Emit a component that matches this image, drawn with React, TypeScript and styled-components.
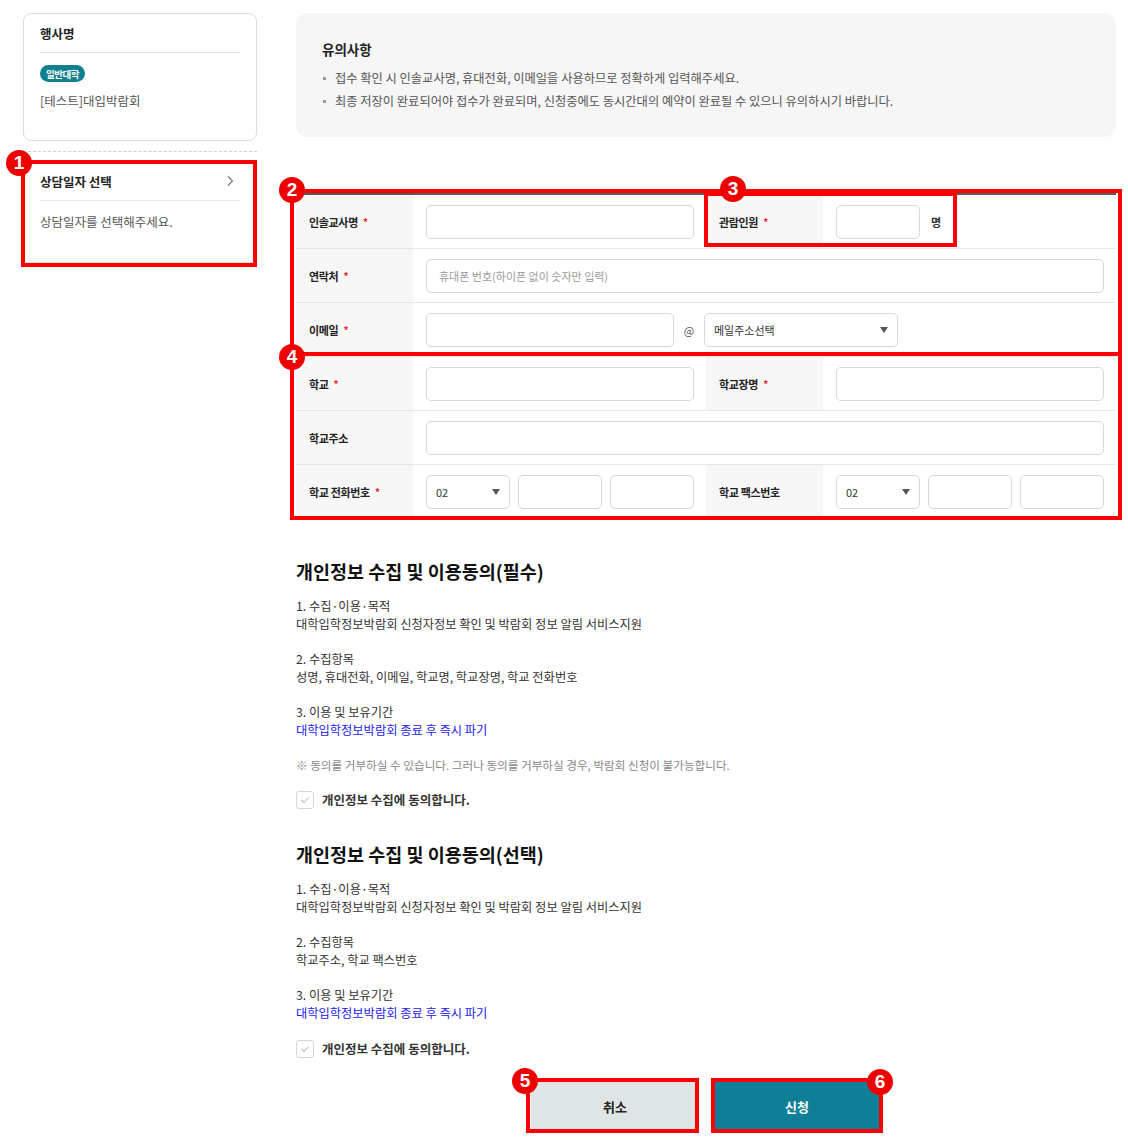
import React from 'react';
import styled, { createGlobalStyle } from 'styled-components';

const GlobalStyle = createGlobalStyle`
  * { box-sizing: border-box; }
  body {
    margin: 0;
    background: #fff;
    color: #222;
    font-family: "Noto Sans CJK KR", "Noto Sans", sans-serif;
  }
`;

const Page = styled.div`
  position: relative;
  width: 1128px;
  display: flex;
  gap: 39px;
  padding: 13px 12px 12px 23px;
`;

const Side = styled.aside`
  width: 234px;
  flex-shrink: 0;
`;

const Main = styled.main`
  width: 820px;
  flex-shrink: 0;
`;

/* ---- left side ---- */

const EventCard = styled.div`
  height: 128px;
  padding: 0 16px;
  border: 1.5px solid #dcdcdc;
  border-radius: 8px;
`;

const CardTitle = styled.div`
  display: flex;
  align-items: center;
  justify-content: space-between;
  height: 39px;
  border-bottom: 1px solid #e6e6e6;
  font-size: 12.5px;
  font-weight: 700;
  color: #222;

  svg {
    margin-right: 5px;
  }
`;

const Tag = styled.span`
  display: inline-flex;
  align-items: center;
  height: 17px;
  margin-top: 12px;
  padding: 0 6px;
  border-radius: 9px;
  background: #13808f;
  color: #fff;
  font-size: 9.5px;
  font-weight: 700;
  letter-spacing: -0.05em;
`;

const EventName = styled.div`
  margin-top: 9px;
  font-size: 12.5px;
  line-height: 18px;
  color: #555;
`;

const DashLine = styled.hr`
  margin: 10px 0 9px;
  border: 0;
  border-top: 1px dashed #cfcfcf;
`;

const DateCard = styled.div`
  height: 102px;
  padding: 0 16px;
  border: 1px solid #e2e2e2;
`;

const Hint = styled.div`
  padding-top: 12px;
  font-size: 12.5px;
  line-height: 18px;
  color: #555;
`;

/* ---- notice ---- */

const Notice = styled.section`
  height: 124px;
  padding: 26px 26px 0;
  border-radius: 12px;
  background: #f6f6f6;
`;

const NoticeTitle = styled.h3`
  margin: 0;
  font-size: 13.5px;
  font-weight: 700;
  line-height: 20px;
  color: #222;
`;

const NoticeList = styled.ul`
  margin: 8px 0 0;
  padding: 0;
  list-style: none;
`;

const NoticeItem = styled.li`
  display: flex;
  align-items: center;
  gap: 9px;
  font-size: 12.25px;
  line-height: 23px;
  color: #555;

  &::before {
    content: '';
    width: 3px;
    height: 3px;
    margin-left: 1px;
    background: #9a9a9a;
    flex-shrink: 0;
  }
`;

/* ---- form table ---- */

const FormTable = styled.div`
  margin-top: 56px;
  border-top: 2px solid #5a5a5a;
`;

const Row = styled.div`
  display: grid;
  grid-template-columns: 117px 293px 117px 293px;
  height: 54px;
  border-bottom: 1px solid #e6e6e6;
`;

const Label = styled.div`
  display: flex;
  align-items: center;
  padding-left: 13px;
  background: #f7f7f7;
  font-size: 11px;
  font-weight: 700;
  letter-spacing: -0.03em;
  color: #222;
`;

const Req = styled.span`
  margin-left: 5px;
  color: #e8262a;
  font-size: 10px;
`;

const Cell = styled.div<{ $span?: boolean }>`
  display: flex;
  align-items: center;
  gap: 8px;
  padding: 0 12px 0 13px;
  grid-column: ${p => (p.$span ? 'span 3' : 'auto')};
`;

const TextInput = styled.input<{ $w?: number }>`
  flex: ${p => (p.$w ? `0 0 ${p.$w}px` : '1 1 0')};
  min-width: 0;
  height: 34px;
  padding: 0 12px;
  border: 1px solid #d8d8d8;
  border-radius: 5px;
  background: #fff;
  font-family: inherit;
  font-size: 11px;
  color: #333;

  &::placeholder {
    color: #9a9a9a;
  }
`;

const SelectBox = styled.div<{ $w?: number }>`
  flex: ${p => (p.$w ? `0 0 ${p.$w}px` : '1 1 0')};
  display: flex;
  align-items: center;
  justify-content: space-between;
  height: 34px;
  padding: 0 9px;
  border: 1px solid #d8d8d8;
  border-radius: 5px;
  background: #fff;
  font-size: 11px;
  color: #333;
`;

const Caret = styled.span`
  width: 0;
  height: 0;
  border-left: 4.5px solid transparent;
  border-right: 4.5px solid transparent;
  border-top: 6px solid #555;
`;

const At = styled.span`
  width: 14px;
  text-align: center;
  font-size: 11px;
  color: #555;
`;

const Unit = styled.span`
  margin-left: 3px;
  font-size: 11px;
  font-weight: 700;
  color: #333;
`;

/* ---- terms ---- */

const Terms = styled.section<{ $top: number }>`
  margin-top: ${p => p.$top}px;
`;

const TermHead = styled.h2`
  margin: 0 0 13px;
  font-size: 18.5px;
  font-weight: 700;
  line-height: 26px;
  color: #111;
`;

const TermBlock = styled.p`
  margin: 0 0 17px;
  font-size: 12.25px;
  line-height: 18px;
  color: #333;
`;

const Blue = styled.span`
  color: #2121ee;
`;

const TermNote = styled.p`
  margin: 0 0 16px;
  font-size: 11.6px;
  line-height: 18px;
  color: #888;
`;

const CheckRow = styled.label`
  display: flex;
  align-items: center;
  gap: 8px;
  font-size: 12.5px;
  font-weight: 700;
  color: #333;
`;

const CheckBox = styled.span`
  display: flex;
  align-items: center;
  justify-content: center;
  width: 18px;
  height: 18px;
  border: 1px solid #d5d5d5;
  border-radius: 3px;
  background: #fff;
`;

/* ---- buttons ---- */

const Actions = styled.div`
  display: flex;
  justify-content: center;
  gap: 14px;
  margin-top: 23px;
`;

const Button = styled.button<{ $primary?: boolean }>`
  width: 168px;
  height: 50px;
  border: 0;
  border-radius: 4px;
  background: ${p => (p.$primary ? '#0e7f96' : '#dfe5e5')};
  color: ${p => (p.$primary ? '#fff' : '#222')};
  font-family: inherit;
  font-size: 13px;
  font-weight: 700;
`;

/* ---- screenshot markup (red boxes and numbered pins) ---- */

const Overlay = styled.div`
  position: absolute;
  inset: 0;
  pointer-events: none;
`;

const Mark = styled.div<{ $x: number; $y: number; $w: number; $h: number }>`
  position: absolute;
  left: ${p => p.$x}px;
  top: ${p => p.$y}px;
  width: ${p => p.$w}px;
  height: ${p => p.$h}px;
  border: 4px solid #ff0000;
`;

const Pin = styled.div<{ $x: number; $y: number }>`
  position: absolute;
  left: ${p => p.$x - 13}px;
  top: ${p => p.$y - 13}px;
  width: 26px;
  height: 26px;
  border-radius: 50%;
  background: #ee0000;
  color: #fff;
  display: flex;
  align-items: center;
  justify-content: center;
  font-family: "Liberation Sans", Arial, sans-serif;
  font-size: 19px;
  font-weight: 700;
`;

const marks = [
  { x: 21, y: 160, w: 236, h: 107 },
  { x: 290, y: 189, w: 832, h: 167 },
  { x: 704, y: 192, w: 253, h: 55 },
  { x: 290, y: 352, w: 832, h: 168 },
  { x: 526, y: 1078, w: 173, h: 55 },
  { x: 711, y: 1078, w: 172, h: 55 },
];

const pins = [
  { n: 1, x: 19, y: 163 },
  { n: 2, x: 292, y: 190 },
  { n: 3, x: 733, y: 189 },
  { n: 4, x: 292, y: 357 },
  { n: 5, x: 525, y: 1081 },
  { n: 6, x: 880, y: 1082 },
];

const Chevron = () => (
  <svg width="10" height="12" viewBox="0 0 10 12">
    <path d="M3 1.5 L7.5 6 L3 10.5" fill="none" stroke="#777" strokeWidth="1.2" />
  </svg>
);

const Check = () => (
  <svg width="10" height="8" viewBox="0 0 10 8">
    <path d="M1.5 4 L4 6.5 L8.5 1.5" fill="none" stroke="#bdbdbd" strokeWidth="1.1" />
  </svg>
);

const Select = ({ value, w }: { value: string; w?: number }) => (
  <SelectBox $w={w}>
    {value}
    <Caret />
  </SelectBox>
);

const Agree = () => (
  <CheckRow>
    <CheckBox>
      <Check />
    </CheckBox>
    개인정보 수집에 동의합니다.
  </CheckRow>
);

const App: React.FC = () => {
  return (
    <>
      <GlobalStyle />
      <Page>
        <Side>
          <EventCard>
            <CardTitle>행사명</CardTitle>
            <Tag>일반대학</Tag>
            <EventName>[테스트]대입박람회</EventName>
          </EventCard>
          <DashLine />
          <DateCard>
            <CardTitle>
              상담일자 선택
              <Chevron />
            </CardTitle>
            <Hint>상담일자를 선택해주세요.</Hint>
          </DateCard>
        </Side>

        <Main>
          <Notice>
            <NoticeTitle>유의사항</NoticeTitle>
            <NoticeList>
              <NoticeItem>접수 확인 시 인솔교사명, 휴대전화, 이메일을 사용하므로 정확하게 입력해주세요.</NoticeItem>
              <NoticeItem>최종 저장이 완료되어야 접수가 완료되며, 신청중에도 동시간대의 예약이 완료될 수 있으니 유의하시기 바랍니다.</NoticeItem>
            </NoticeList>
          </Notice>

          <FormTable>
            <Row>
              <Label>인솔교사명<Req>*</Req></Label>
              <Cell><TextInput /></Cell>
              <Label>관람인원<Req>*</Req></Label>
              <Cell>
                <TextInput $w={84} />
                <Unit>명</Unit>
              </Cell>
            </Row>
            <Row>
              <Label>연락처<Req>*</Req></Label>
              <Cell $span>
                <TextInput placeholder="휴대폰 번호(하이픈 없이 숫자만 입력)" />
              </Cell>
            </Row>
            <Row>
              <Label>이메일<Req>*</Req></Label>
              <Cell $span>
                <TextInput $w={248} />
                <At>@</At>
                <Select value="메일주소선택" w={194} />
              </Cell>
            </Row>
            <Row>
              <Label>학교<Req>*</Req></Label>
              <Cell><TextInput /></Cell>
              <Label>학교장명<Req>*</Req></Label>
              <Cell><TextInput /></Cell>
            </Row>
            <Row>
              <Label>학교주소</Label>
              <Cell $span><TextInput /></Cell>
            </Row>
            <Row>
              <Label>학교 전화번호<Req>*</Req></Label>
              <Cell>
                <Select value="02" w={84} />
                <TextInput $w={84} />
                <TextInput $w={84} />
              </Cell>
              <Label>학교 팩스번호</Label>
              <Cell>
                <Select value="02" w={84} />
                <TextInput $w={84} />
                <TextInput $w={84} />
              </Cell>
            </Row>
          </FormTable>

          <Terms $top={39}>
            <TermHead>개인정보 수집 및 이용동의(필수)</TermHead>
            <TermBlock>
              1. 수집·이용·목적<br />
              대학입학정보박람회 신청자정보 확인 및 박람회 정보 알림 서비스지원
            </TermBlock>
            <TermBlock>
              2. 수집항목<br />
              성명, 휴대전화, 이메일, 학교명, 학교장명, 학교 전화번호
            </TermBlock>
            <TermBlock>
              3. 이용 및 보유기간<br />
              <Blue>대학입학정보박람회 종료 후 즉시 파기</Blue>
            </TermBlock>
            <TermNote>※ 동의를 거부하실 수 있습니다. 그러나 동의를 거부하실 경우, 박람회 신청이 불가능합니다.</TermNote>
            <Agree />
          </Terms>

          <Terms $top={32}>
            <TermHead>개인정보 수집 및 이용동의(선택)</TermHead>
            <TermBlock>
              1. 수집·이용·목적<br />
              대학입학정보박람회 신청자정보 확인 및 박람회 정보 알림 서비스지원
            </TermBlock>
            <TermBlock>
              2. 수집항목<br />
              학교주소, 학교 팩스번호
            </TermBlock>
            <TermBlock>
              3. 이용 및 보유기간<br />
              <Blue>대학입학정보박람회 종료 후 즉시 파기</Blue>
            </TermBlock>
            <Agree />
          </Terms>

          <Actions>
            <Button>취소</Button>
            <Button $primary>신청</Button>
          </Actions>
        </Main>

        <Overlay>
          {marks.map((m, i) => (
            <Mark key={i} $x={m.x} $y={m.y} $w={m.w} $h={m.h} />
          ))}
          {pins.map(p => (
            <Pin key={p.n} $x={p.x} $y={p.y}>{p.n}</Pin>
          ))}
        </Overlay>
      </Page>
    </>
  );
};

export default App;
